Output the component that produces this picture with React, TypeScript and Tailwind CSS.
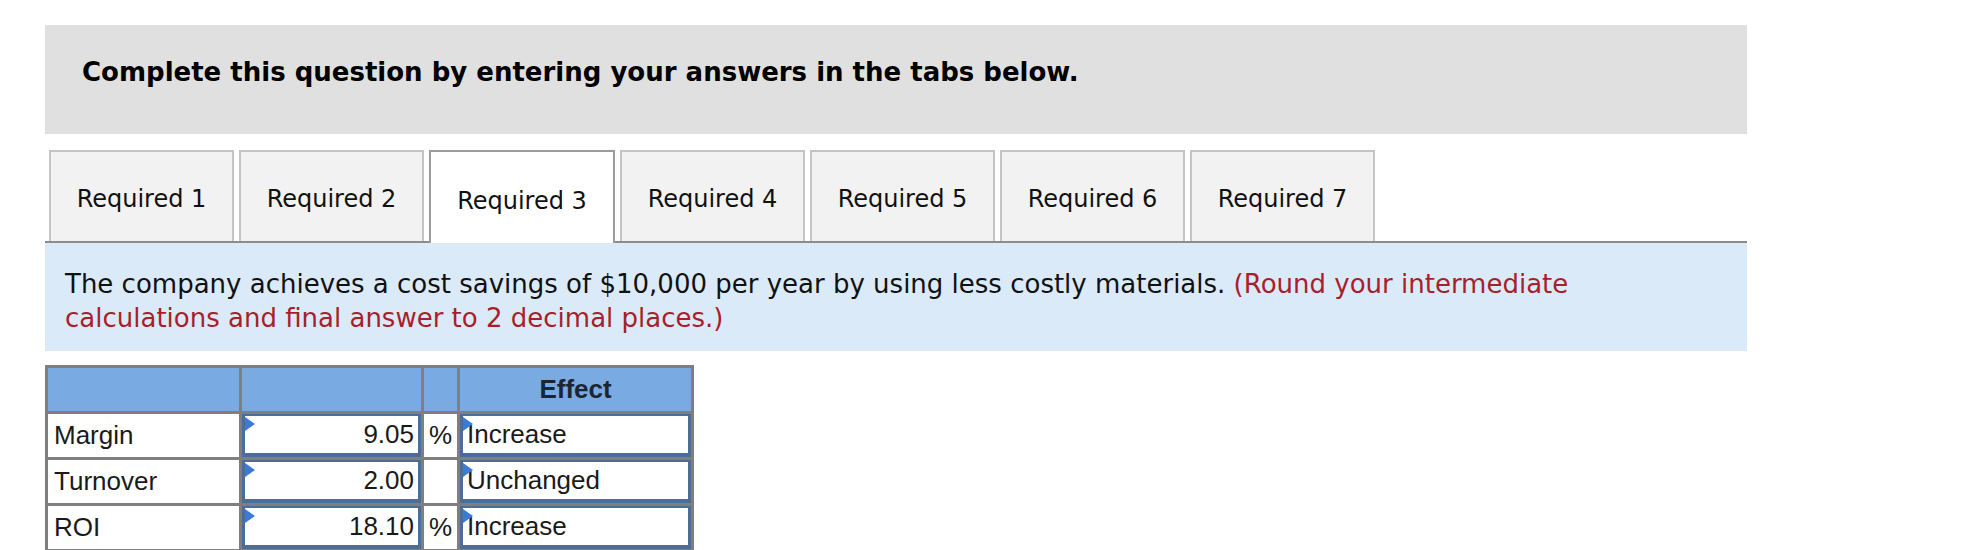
import React from "react";

const tabs = ["Required 1", "Required 2", "Required 3", "Required 4", "Required 5", "Required 6", "Required 7"];

function Tri() {
  return (
    <svg className="absolute left-0 top-[1px]" width="10" height="14" viewBox="0 0 10 14">
      <polygon points="0,0 10,7 0,14" fill="#3b7bd4" />
    </svg>
  );
}

function InputCell({ children, align }: { children?: React.ReactNode; align: "left" | "right" }) {
  return (
    <td className="p-0 border-[3px] border-[#7f7f7f]">
      <div className="relative h-[43px] border-x-[3px] border-t-2 border-b-[4px] border-[#4b6d9a] bg-white flex items-center">
        <Tri />
        <span className={align === "right" ? "w-full text-right pr-[4px]" : "w-full text-left pl-[4px]"}>{children}</span>
      </div>
    </td>
  );
}

export default function App() {
  const rows: [string, string, string, string][] = [
    ["Margin", "9.05", "%", "Increase"],
    ["Turnover", "2.00", "", "Unchanged"],
    ["ROI", "18.10", "%", "Increase"],
  ];
  return (
    <div className="w-[1969px] h-[550px] bg-white overflow-hidden pt-[25px] pl-[45px]">
      <div className="w-[1702px]">
        <div className="h-[109px] bg-[#e0e0e0] pl-[37px] pt-[32px]">
          <h1
            className="text-[26px] leading-[30px] font-bold text-black"
            style={{ fontFamily: '"DejaVu Sans", Verdana, sans-serif' }}
          >
            Complete this question by entering your answers in the tabs below.
          </h1>
        </div>
        <div
          className="mt-[16px] h-[93px] flex items-end gap-[5px] pl-[4px] border-b-2 border-[#8c8c8c]"
          style={{ fontFamily: '"DejaVu Sans", Verdana, sans-serif' }}
        >
          {tabs.map((t, i) =>
            i === 2 ? (
              <div
                key={t}
                className="w-[186px] h-[93px] -mb-[2px] bg-white border-2 border-b-0 border-[#9b9b9b] flex items-center justify-center pt-[6px] text-[24px] text-[#111]"
              >
                {t}
              </div>
            ) : (
              <div
                key={t}
                className="w-[185px] h-[91px] bg-[#f2f2f2] border-2 border-b-0 border-[#c4c4c4] flex items-center justify-center pt-[4px] text-[24px] text-[#111]"
              >
                {t}
              </div>
            )
          )}
        </div>
        <div
          className="h-[108px] bg-[#dbeaf8] pl-[20px] pr-[20px] pt-[24px] text-[26px] leading-[34px] text-[#111]"
          style={{ fontFamily: '"DejaVu Sans", Verdana, sans-serif' }}
        >
          The company achieves a cost savings of $10,000 per year by using less costly materials.{" "}
          <span className="text-[#a81f2b]">(Round your intermediate calculations and final answer to 2 decimal places.)</span>
        </div>
        <table
          className="mt-[14px] border-collapse text-[26px] text-[#1a1a1a]"
          style={{ fontFamily: '"Liberation Sans", Arial, sans-serif' }}
        >
          <thead>
            <tr className="bg-[#79aae2]">
              <th className="w-[194px] h-[46px] border-[3px] border-[#7f7f7f] p-0"></th>
              <th className="w-[182px] h-[46px] border-[3px] border-[#7f7f7f] p-0"></th>
              <th className="w-[36px] h-[46px] border-[3px] border-[#7f7f7f] p-0"></th>
              <th className="w-[234px] h-[46px] border-[3px] border-[#7f7f7f] p-0 font-bold text-[#1c2633] text-center">Effect</th>
            </tr>
          </thead>
          <tbody>
            {rows.map((r) => (
              <tr key={r[0]}>
                <td className="border-[3px] border-[#7f7f7f] bg-white pl-[6px] p-0">{r[0]}</td>
                <InputCell align="right">{r[1]}</InputCell>
                <td className="border-[3px] border-[#7f7f7f] bg-white text-center p-0">{r[2]}</td>
                <InputCell align="left">{r[3]}</InputCell>
              </tr>
            ))}
          </tbody>
        </table>
      </div>
    </div>
  );
}
